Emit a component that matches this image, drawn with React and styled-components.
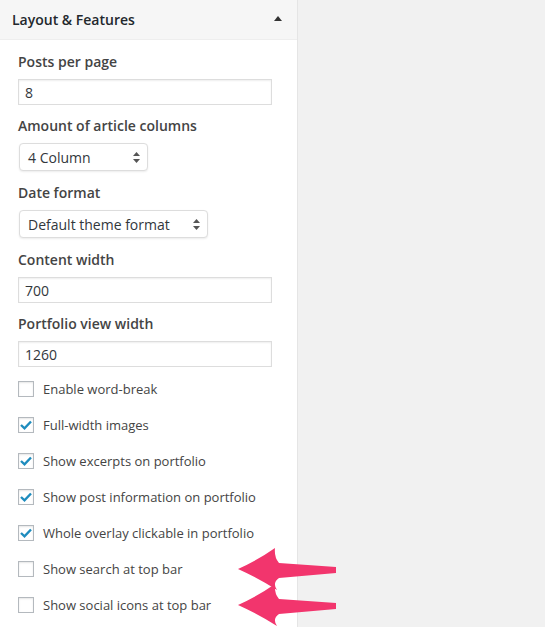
import React from 'react';
import styled, { createGlobalStyle } from 'styled-components';

const GlobalStyle = createGlobalStyle`
  html, body {
    margin: 0;
    padding: 0;
    background: #f1f1f1;
    font-family: "Open Sans", "Liberation Sans", sans-serif;
    font-size: 14px;
    color: #444;
  }
`;

const Page = styled.div`
  position: relative;
  width: 545px;
  height: 627px;
  overflow: hidden;
  display: flex;
`;

const Panel = styled.div`
  width: 297px;
  min-height: 627px;
  background: #fff;
  border-right: 1px solid #e5e5e5;
  display: flex;
  flex-direction: column;
`;

const Header = styled.div`
  box-sizing: border-box;
  height: 40px;
  background: #f6f6f6;
  border-bottom: 1px solid #eeeeee;
  display: flex;
  align-items: center;
  justify-content: space-between;
  padding: 0 15px 0 12px;
  font-weight: 600;
  font-size: 14px;
  color: #23282d;
`;

const Toggle = styled.span`
  width: 0;
  height: 0;
  border-left: 4px solid transparent;
  border-right: 4px solid transparent;
  border-bottom: 5px solid #333;
  margin-top: -2px;
`;

const Body = styled.div`
  padding: 12px 18px 0 18px;
  display: flex;
  flex-direction: column;
`;

const Label = styled.div`
  font-weight: 600;
  line-height: 20px;
  color: #444;
  margin-bottom: 7px;
`;

const Field = styled.div`
  margin-bottom: ${p => (p.$last ? '4px' : p.$select ? '12px' : '11px')};
`;

const TextBox = styled.div`
  box-sizing: border-box;
  width: 254px;
  height: 26px;
  border: 1px solid #ddd;
  box-shadow: inset 0 1px 2px rgba(0, 0, 0, 0.07);
  padding-left: 6px;
  display: flex;
  align-items: center;
  color: #32373c;
`;

const Select = styled.div`
  box-sizing: border-box;
  width: ${p => p.$w}px;
  height: 28px;
  margin-left: 1px;
  border: 1px solid #ddd;
  border-radius: 4px;
  box-shadow: 0 1px 2px rgba(0, 0, 0, 0.08);
  padding: 0 7px 0 8px;
  display: flex;
  align-items: center;
  justify-content: space-between;
  color: #32373c;
  background: #fff;
`;

const Row = styled.div`
  height: 36px;
  display: flex;
  align-items: center;
  font-size: 13px;
  color: #444;
`;

const Box = styled.span`
  box-sizing: border-box;
  width: 16px;
  height: 16px;
  border: 1px solid #b4b9be;
  box-shadow: inset 0 1px 2px rgba(0, 0, 0, 0.1);
  margin-right: 9px;
  display: flex;
  align-items: center;
  justify-content: center;
  background: #fff;
`;

const Arrows = styled.svg`
  position: absolute;
  left: 230px;
  top: 540px;
`;

const Updown = () => (
  <svg width="7" height="11" viewBox="0 0 7 11">
    <path d="M3.5 0 L7 4 L0 4 Z M0 7 L7 7 L3.5 11 Z" fill="#555" />
  </svg>
);

const Check = () => (
  <svg width="12" height="10" viewBox="0 0 12 10">
    <path d="M1 5 L4.5 8.3 L11 1.5" stroke="#1e8cbe" strokeWidth="2.4" fill="none" />
  </svg>
);

const fields = [
  { label: 'Posts per page', value: '8' },
  { label: 'Amount of article columns', value: '4 Column', select: 129 },
  { label: 'Date format', value: 'Default theme format', select: 189 },
  { label: 'Content width', value: '700' },
  { label: 'Portfolio view width', value: '1260' },
];

const checks = [
  ['Enable word-break', false],
  ['Full-width images', true],
  ['Show excerpts on portfolio', true],
  ['Show post information on portfolio', true],
  ['Whole overlay clickable in portfolio', true],
  ['Show search at top bar', false],
  ['Show social icons at top bar', false],
];

const arrow = 'M8,29 Q28,20 45,8 Q44,17 49,23 L106,27 L106,33 L49,38 Q42,43 47,50 Q28,38 8,29 Z';

export default function App() {
  return (
    <Page>
      <GlobalStyle />
      <Panel>
        <Header>
          Layout &amp; Features
          <Toggle />
        </Header>
        <Body>
          {fields.map((f, i) => (
            <Field key={f.label} $select={!!f.select} $last={i === fields.length - 1}>
              <Label>{f.label}</Label>
              {f.select ? (
                <Select $w={f.select}>
                  {f.value}
                  <Updown />
                </Select>
              ) : (
                <TextBox>{f.value}</TextBox>
              )}
            </Field>
          ))}
          {checks.map(([t, on]) => (
            <Row key={t}>
              <Box>{on && <Check />}</Box>
              {t}
            </Row>
          ))}
        </Body>
      </Panel>
      <Arrows width="115" height="87" viewBox="0 0 115 87">
        <path d={arrow} fill="#f2356d" />
        <path d={arrow} fill="#f2356d" transform="translate(0,36)" />
      </Arrows>
    </Page>
  );
}
